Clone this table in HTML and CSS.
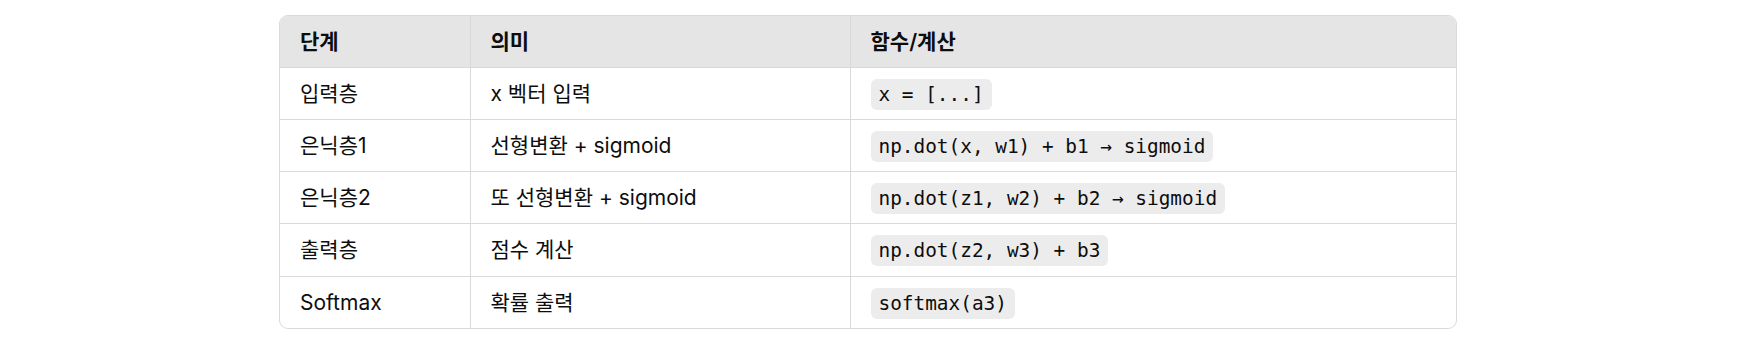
FILE: index.html
```html
<!DOCTYPE html>
<html lang="ko">
<head>
<meta charset="utf-8">
<title>신경망 단계</title>
<link rel="stylesheet" href="styles.css">
</head>
<body>
<main class="page">
  <div class="table-wrap">
    <table class="steps">
      <colgroup>
        <col class="c1">
        <col class="c2">
        <col class="c3">
      </colgroup>
      <thead>
        <tr><th>단계</th><th>의미</th><th>함수/계산</th></tr>
      </thead>
      <tbody>
        <tr><td>입력층</td><td>x 벡터 입력</td><td><code>x = [...]</code></td></tr>
        <tr><td>은닉층1</td><td>선형변환 + sigmoid</td><td><code>np.dot(x, w1) + b1 → sigmoid</code></td></tr>
        <tr><td>은닉층2</td><td>또 선형변환 + sigmoid</td><td><code>np.dot(z1, w2) + b2 → sigmoid</code></td></tr>
        <tr><td>출력층</td><td>점수 계산</td><td><code>np.dot(z2, w3) + b3</code></td></tr>
        <tr><td>Softmax</td><td>확률 출력</td><td><code>softmax(a3)</code></td></tr>
      </tbody>
    </table>
  </div>
</main>
</body>
</html>
```

FILE: styles.css
```css
html, body {
  margin: 0;
  background: #ffffff;
}

body {
  font-family: Inter, "Noto Sans CJK KR", sans-serif;
  color: #0d0d0d;
  font-size: 21px;
}

.page {
  padding: 15px 283px 0 279px;
}

.table-wrap {
  border: 1px solid #d9d9d9;
  border-radius: 9px;
  overflow: hidden;
}

.steps {
  width: 100%;
  border-collapse: collapse;
  table-layout: fixed;
}

.c1 { width: 190px; }
.c2 { width: 380px; }

.steps th,
.steps td {
  text-align: left;
  padding: 0 20px;
  line-height: 31px;
  height: 52.25px;
  box-sizing: border-box;
  border-left: 1px solid #d9d9d9;
  border-top: 1px solid #d9d9d9;
  white-space: nowrap;
  vertical-align: middle;
}

.steps th:first-child,
.steps td:first-child {
  border-left: none;
}

.steps thead th {
  height: 51px;
  border-top: none;
  background: #e5e5e5;
  font-weight: 600;
}

.steps code {
  font-family: "DejaVu Sans Mono", monospace;
  font-size: 19.4px;
  line-height: 1;
  background: #ececec;
  border-radius: 6px;
  padding: 4px 8px;
}
```
